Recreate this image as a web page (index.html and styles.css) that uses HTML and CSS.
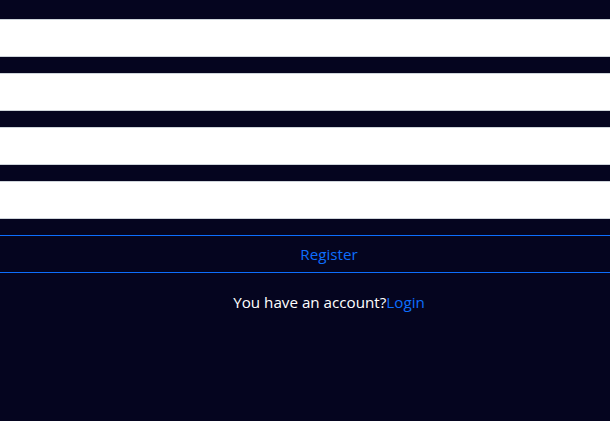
FILE: index.html
```html
<!DOCTYPE html>
<html>
<head>
<meta charset="utf-8">
<link rel="stylesheet" href="styles.css">
</head>
<body>
<div class="page">
  <form class="form">
    <input class="field" type="text">
    <input class="field" type="email">
    <input class="field" type="password">
    <input class="field" type="password">
    <button class="btn" type="button">Register</button>
  </form>
  <p class="note">You have an account?<a class="link" href="#">Login</a></p>
</div>
</body>
</html>
```
FILE: styles.css
```css
html, body {
  margin: 0;
  padding: 0;
  background: #05051f;
  overflow: hidden;
}
.page {
  width: 610px;
  padding-top: 19px;
  font-family: "Open Sans", "Noto Sans", sans-serif;
  font-size: 15.2px;
}
.form {
  display: flex;
  flex-direction: column;
  gap: 16px;
  margin: 0 -1px;
}
.field {
  display: block;
  box-sizing: border-box;
  width: 100%;
  height: 38px;
  margin: 0;
  border: 1px solid #ced4da;
  background: #fff;
  padding: 0 12px;
}
.btn {
  box-sizing: border-box;
  width: 100%;
  height: 38px;
  margin: 0;
  border: 1px solid #0d6efd;
  background: transparent;
  color: #0d6efd;
  font: inherit;
  padding: 0 0 0 48px;
}
.note {
  margin: 17px 0 0;
  padding-left: 48px;
  text-align: center;
  color: #fff;
  line-height: 24px;
}
.link {
  color: #0d6efd;
  text-decoration: none;
}
```
